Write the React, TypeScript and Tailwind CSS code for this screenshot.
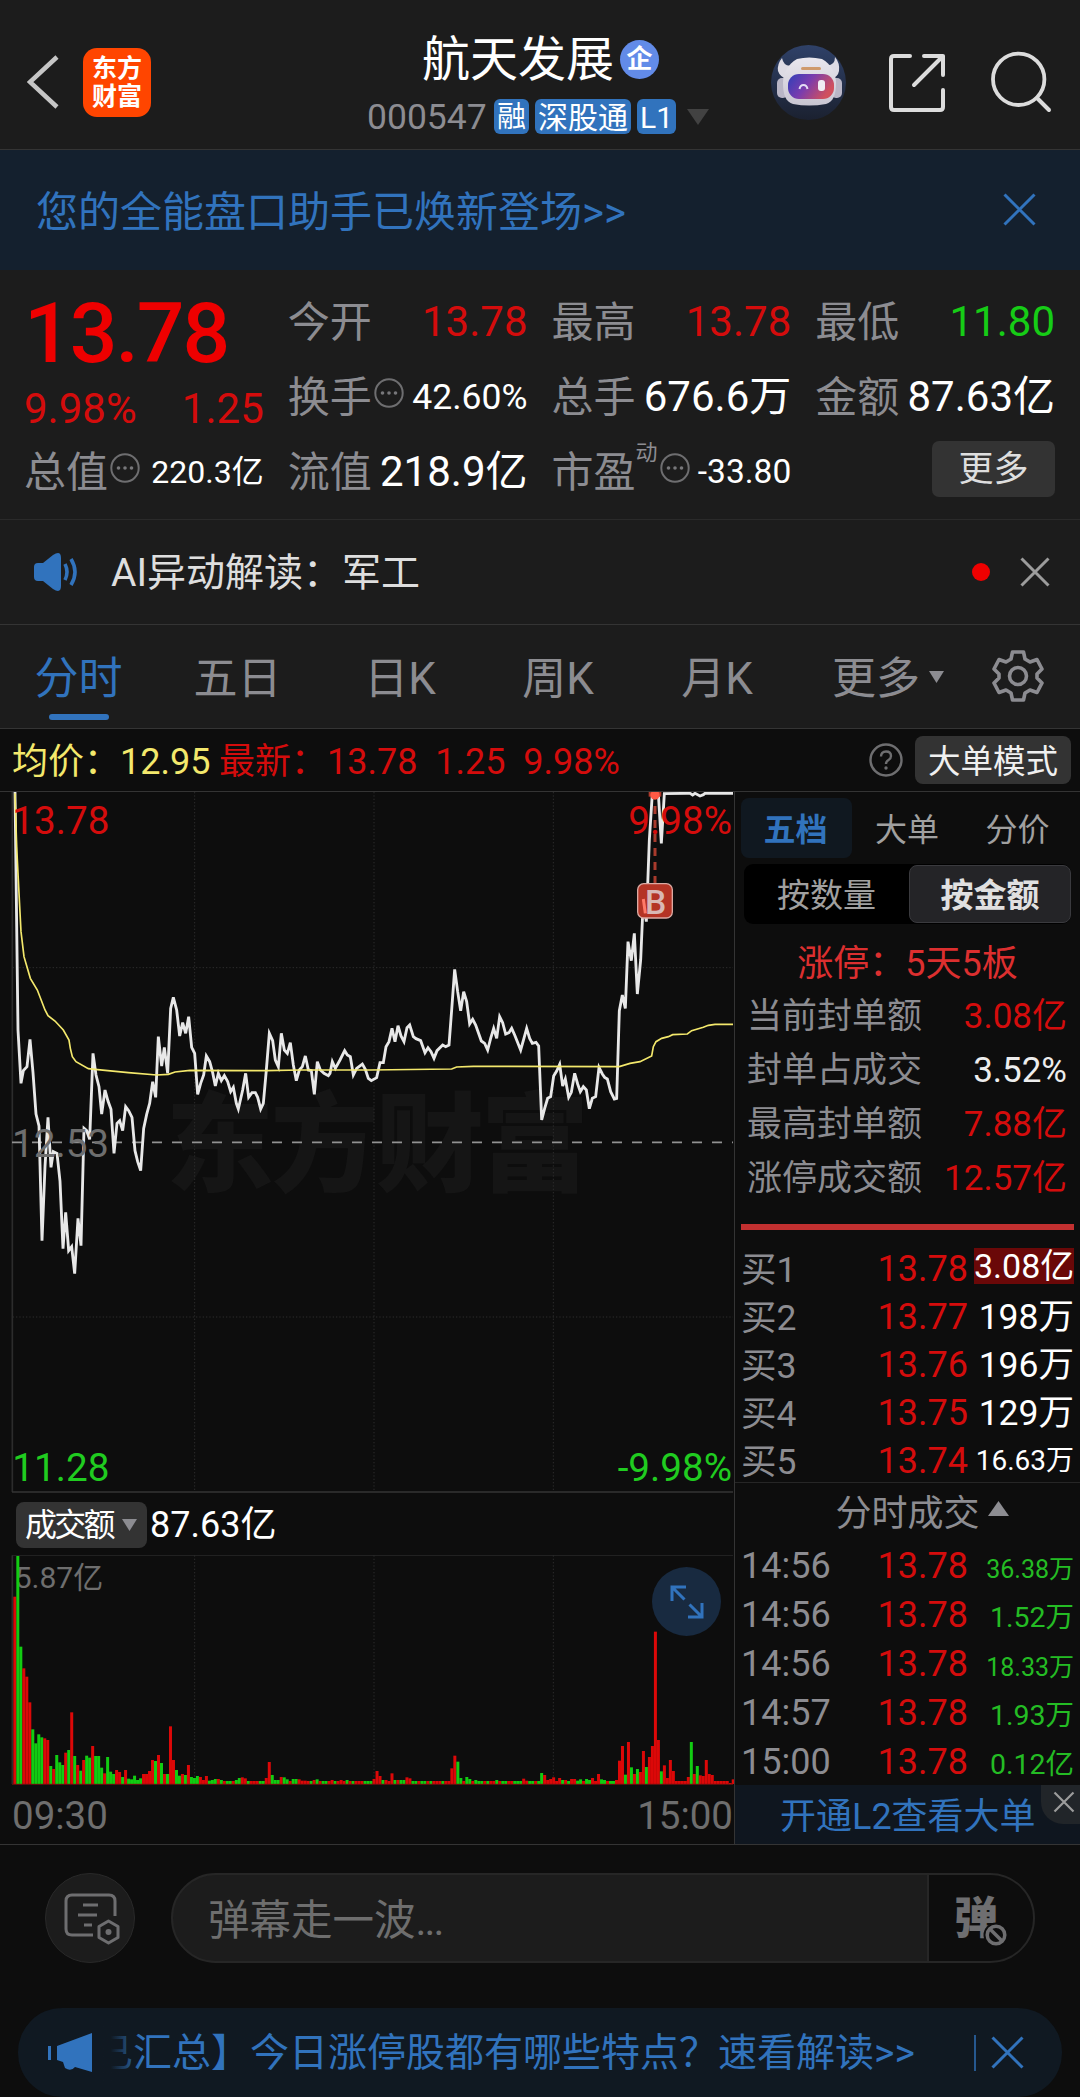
import React from "react";
import { clsx } from "clsx";

// avg / price series, three units per pixel
const pricePoints =
  "45,36 54,750 63,910 70,872 81,860 90,778 99,878 108,1002 117,1038 126,1382 135,1160 144,1012 153,1162 160,1115 171,1120 180,1203 189,1406 197,1297 206,1412 215,1400 224,1481 234,1315 243,1397 252,1045 260,1052 269,1078 279,820 288,885 297,920 305,1002 315,930 324,963 333,988 342,1120 351,1030 359,1022 368,1052 377,980 386,992 396,1012 405,1112 413,1145 422,1172 431,1045 440,1003 449,970 458,905 467,952 475,770 485,858 493,802 503,880 512,685 520,652 530,690 539,768 548,728 557,760 566,710 575,802 584,820 593,943 602,910 611,885 619,828 629,845 638,878 646,918 655,880 664,902 673,887 683,905 692,935 700,922 709,970 715,987 728,930 737,880 746,952 756,938 766,938 773,952 782,987 790,970 799,870 808,760 818,782 826,840 835,860 844,760 853,810 862,820 871,788 880,855 889,902 898,870 907,860 916,828 925,870 934,872 943,943 952,845 961,870 972,880 985,887 990,880 997,845 1006,865 1020,840 1034,812 1042,825 1051,830 1060,885 1070,865 1087,852 1096,868 1105,895 1114,902 1130,893 1140,848 1150,848 1158,800 1167,785 1176,745 1185,785 1194,737 1203,768 1212,785 1221,743 1229,735 1240,770 1248,776 1262,782 1275,818 1284,803 1293,815 1302,835 1311,812 1328,795 1337,800 1347,795 1355,690 1364,568 1373,635 1382,692 1391,635 1400,665 1409,732 1418,718 1427,735 1444,783 1454,790 1463,810 1472,775 1481,745 1490,775 1499,710 1508,728 1517,762 1527,758 1535,745 1544,765 1562,810 1571,778 1580,745 1589,775 1597,790 1608,787 1616,798 1625,1020 1634,985 1643,955 1652,950 1661,888 1670,873 1679,853 1688,918 1696,897 1706,952 1714,937 1724,880 1733,912 1741,935 1750,920 1759,930 1768,986 1777,955 1787,950 1797,862 1807,882 1814,892 1822,897 1832,935 1843,957 1850,955 1858,692 1867,645 1876,685 1884,485 1894,542 1903,460 1912,642 1922,540 1930,357 1939,425 1948,180 1957,40 1975,40 1984,190 1993,41 2060,40 2070,40 2078,45 2085,40 2100,48 2110,44 2115,40 2199,40";

const avgPoints =
  "45,40 50,200 56,320 63,455 72,530 91,595 112,630 135,690 144,707 165,723 190,750 207,780 211,805 217,830 228,845 265,866 285,868 385,878 470,885 505,883 525,876 570,871 800,872 900,870 1110,870 1355,867 1370,861 1420,859 1850,860 1858,860 1890,850 1920,845 1955,828 1960,800 1968,785 1985,775 2005,770 2018,764 2062,762 2075,752 2110,742 2125,736 2145,733 2199,733";

// one bar a minute: positive = up (red), negative = down (green)
const volumes = [
  562, -684, -412, 347, 322, 245, -164, -122, -149, -140, 137, 132, -54, 45, -87, -65, -57, 94, -102, 215,
  -84, 57, -40, 72, -85, -79, 114, -84, -84, -49, 32, -81, -37, -30, 42, 36, -21, 42, -16, -14,
  -25, -12, -17, 30, 30, 39, 72, -69, 87, -63, 30, -30, 173, 72, -42, -25, 30, -27, 57, -21,
  -18, -24, 21, 12, 24, -10, -12, -15, 15, -12, 9, -9, -9, 9, -12, -18, 20, 17, -9, 9,
  9, 9, -9, -9, 18, 66, -27, -12, -12, 21, -20, -14, 9, -15, -15, 14, 10, 10, 9, -9,
  12, -14, 9, -9, -9, 9, 12, -9, 9, 12, 9, -12, 9, -9, 9, 9, 9, -9, -9, -9,
  15, 39, 24, -12, 12, 9, 32, -12, 12, -12, -12, 20, 17, -9, -9, 9, -9, -9, 9, -9,
  9, 9, 9, -9, 9, 9, 47, 85, -67, -18, 9, -21, -15, 9, -12, -9, -9, 9, -9, 9,
  9, -12, 9, -9, -9, 9, 9, -9, -9, -9, 16, 10, -9, -9, 9, -9, -33, 27, 12, 15,
  20, 9, 18, -12, 12, -9, 15, 15, -10, -14, 9, -15, -12, 18, 9, 30, -14, -12, 9, -9,
  -9, 12, 70, 114, -28, 126, -50, 30, -45, 36, 99, -51, 81, 114, 457, 132, -38, 56, 18, 72,
  39, 9, 9, 9, 9, 21, -126, 30, -54, 26, 24, 72, 30, 27, 9, 9, 9, 9, 9, 3, 14,
];

const periods = [
  { label: "分时", box: "w-[157px]", active: true },
  { label: "五日", box: "w-[161px]" },
  { label: "日K", box: "w-[164px]" },
  { label: "周K", box: "w-[152px]" },
  { label: "月K", box: "w-[166px]" },
];

const limitStats = [
  { label: "当前封单额", value: "3.08亿", color: "text-[#d40c0c]" },
  { label: "封单占成交", value: "3.52%", color: "text-[#ededed]" },
  { label: "最高封单额", value: "7.88亿", color: "text-[#d40c0c]" },
  { label: "涨停成交额", value: "12.57亿", color: "text-[#d40c0c]" },
];

const bids = [
  { label: "买1", price: "13.78", amount: "3.08亿", size: "text-[34px]", highlight: true },
  { label: "买2", price: "13.77", amount: "198万", size: "text-[35.5px]" },
  { label: "买3", price: "13.76", amount: "196万", size: "text-[35.5px]" },
  { label: "买4", price: "13.75", amount: "129万", size: "text-[35.5px]" },
  { label: "买5", price: "13.74", amount: "16.63万", size: "text-[28px]" },
];

const ticks = [
  { time: "14:56", amount: "36.38万", small: true },
  { time: "14:56", amount: "1.52万" },
  { time: "14:56", amount: "18.33万", small: true },
  { time: "14:57", amount: "1.93万" },
  { time: "15:00", amount: "0.12亿" },
];

const Cross = ({ size, className, width = 3 }: { size: number; className?: string; width?: number }) => (
  <svg width={size} height={size} viewBox={`0 0 ${size} ${size}`} className={clsx("shrink-0", className)}>
    <path
      d={`M1.5 1.5L${size - 1.5} ${size - 1.5}M${size - 1.5} 1.5L1.5 ${size - 1.5}`}
      stroke="currentColor"
      strokeWidth={width}
      fill="none"
    />
  </svg>
);

const Dots = () => (
  <svg width="30" height="30" viewBox="0 0 30 30" className="mb-[7px] ml-[2px] shrink-0">
    <circle cx="15" cy="15" r="13.7" fill="none" stroke="#6e6e70" strokeWidth="2" />
    <circle cx="8.5" cy="15" r="1.8" fill="#77777a" />
    <circle cx="15" cy="15" r="1.8" fill="#77777a" />
    <circle cx="21.5" cy="15" r="1.8" fill="#77777a" />
  </svg>
);

const Robot = () => (
  <svg width="76" height="76" viewBox="0 0 76 76">
    <defs>
      <linearGradient id="visor" x1="0" y1="0" x2="1" y2="0.4">
        <stop offset="0" stopColor="#2f3fb8" />
        <stop offset="0.5" stopColor="#7a3cae" />
        <stop offset="1" stopColor="#d0505e" />
      </linearGradient>
      <linearGradient id="halo" x1="0" y1="0" x2="0" y2="1">
        <stop offset="0" stopColor="#2f4168" />
        <stop offset="1" stopColor="#1b2130" />
      </linearGradient>
      <linearGradient id="helmet" x1="0" y1="0" x2="0" y2="1">
        <stop offset="0" stopColor="#e9e7ee" />
        <stop offset="1" stopColor="#c9c6d2" />
      </linearGradient>
    </defs>
    <circle cx="37.5" cy="37.5" r="37.5" fill="url(#halo)" />
    <path d="M11 13Q6 19 7 26Q9 32 16 34L23 20Q13 23 11 13Z" fill="#dddbe4" />
    <path d="M64 12Q69 18 68 26Q67 32 60 34L53 20Q64 22 64 12Z" fill="#dddbe4" />
    <rect x="6" y="33" width="11" height="20" rx="5" fill="#b9b6c6" />
    <rect x="60" y="33" width="11" height="20" rx="5" fill="#b9b6c6" />
    <path
      d="M26 14Q38 11 51 14C60 19 65 28 65 38C65 50 62 57 55 59Q38 62 22 59C15 57 12 50 12 38C12 28 17 19 26 14Z"
      fill="url(#helmet)"
    />
    <rect x="30" y="22" width="20" height="3" rx="1.5" fill="#cf9a6c" />
    <rect x="17" y="29" width="46" height="25" rx="11" fill="url(#visor)" />
    <path d="M28.5 44C29.5 38.5 35.5 38.5 36.5 44" stroke="#e4dcf4" strokeWidth="2" fill="none" />
    <rect x="47" y="35" width="7" height="11" rx="3" fill="#f0ecf4" />
  </svg>
);

const Header = () => (
  <header className="flex h-[150px] border-b border-[#343434] bg-[#1c1c1c]">
    <div className="flex w-[368px] items-start pl-[27px] pt-[48px]">
      <svg width="32" height="54" viewBox="0 0 32 54" className="mt-[7px]">
        <path d="M30 2L3 27L30 52" fill="none" stroke="#c6c6c6" strokeWidth="4.5" />
      </svg>
      <div className="ml-[24px] flex h-[69px] w-[68px] flex-col items-center justify-center rounded-[14px] bg-[#ff4500] text-[25px] leading-[28px] font-bold text-white">
        <span>东方</span>
        <span>财富</span>
      </div>
    </div>
    <div className="flex w-[403px] flex-col pt-[32px]">
      <div className="flex h-[54px] items-center pl-[54px] text-[48px] leading-[54px] text-white">
        <span className="pt-[2px]">航天发展</span>
        <span className="ml-[6px] flex size-[39px] items-center justify-center rounded-full bg-[#628be8] text-[26px] leading-[39px] font-bold">
          企
        </span>
      </div>
      <div className="mt-[12px] flex h-[37px] items-center gap-[6px] text-[31px] leading-[37px] text-white">
        <span className="-ml-px w-[121px] pt-px text-[35.5px] text-[#8c8c91]">000547</span>
        <span className="h-[35px] w-[35px] rounded-[6px] bg-[#3173bd] text-center text-[29px]">融</span>
        <span className="h-[35px] w-[96px] rounded-[6px] bg-[#3173bd] text-center text-[30px]">深股通</span>
        <span className="h-[35px] w-[39px] rounded-[6px] bg-[#3173bd] text-center text-[30px]">L1</span>
        <svg width="22" height="16" viewBox="0 0 22 16" className="ml-[5px]">
          <path d="M0 0H22L11 16Z" fill="#424242" />
        </svg>
      </div>
    </div>
    <div className="flex h-[120px] items-start pt-[45px]">
      <Robot />
      <svg
        width="60"
        height="60"
        viewBox="0 0 60 60"
        className="mt-[8px] ml-[40px]"
        fill="none"
        stroke="#dcdcdc"
        strokeWidth="4"
        strokeLinecap="round"
        strokeLinejoin="round"
      >
        <path d="M23 3H7Q4 3 4 6V54Q4 57 7 57H53Q56 57 56 54V37M37 3H56V22M56 3L27 32" />
      </svg>
      <svg width="64" height="64" viewBox="0 0 64 64" className="mt-[5px] ml-[42px]">
        <circle cx="29.7" cy="29.3" r="25.7" fill="none" stroke="#dcdcdc" strokeWidth="3.8" />
        <path d="M48 48L60 60" stroke="#dcdcdc" strokeWidth="4" strokeLinecap="round" />
      </svg>
    </div>
  </header>
);

const Label = ({ children }: { children: React.ReactNode }) => (
  <span className="-ml-px pt-[3px]">{children}</span>
);

const Quotes = () => (
  <section className="grid h-[250px] grid-cols-4 grid-rows-[75px_75px_75px] gap-x-[25px] border-b border-[#2a2a2a] bg-[#1c1c1c] px-[25px] pt-[14px] text-[42px] leading-[50px] text-[#8c8c91]">
    <div className="row-span-2 text-[#d40c0c]">
      <div className="-ml-px h-[100px] text-[84px] leading-[100px] font-medium tracking-[-2px] text-[#ee0000]">
        13.78
      </div>
      <div className="-ml-px flex h-[50px] items-center justify-between">
        <span>9.98%</span>
        <span>1.25</span>
      </div>
    </div>
    <div className="flex items-center justify-between">
      <Label>今开</Label>
      <span className="text-[#d40c0c]">13.78</span>
    </div>
    <div className="flex items-center justify-between">
      <Label>最高</Label>
      <span className="text-[#d40c0c]">13.78</span>
    </div>
    <div className="flex items-center justify-between">
      <Label>最低</Label>
      <span className="text-[#16cc16]">11.80</span>
    </div>
    <div className="flex items-center">
      <Label>换手</Label>
      <Dots />
      <span className="ml-auto text-[35.5px] text-white">42.60%</span>
    </div>
    <div className="flex items-center justify-between">
      <Label>总手</Label>
      <span className="text-white">676.6万</span>
    </div>
    <div className="flex items-center justify-between">
      <Label>金额</Label>
      <span className="text-white">87.63亿</span>
    </div>
    <div className="flex items-center">
      <Label>总值</Label>
      <Dots />
      <span className="ml-auto text-[32px] text-white">220.3亿</span>
    </div>
    <div className="flex items-center justify-between">
      <Label>流值</Label>
      <span className="text-white">218.9亿</span>
    </div>
    <div className="flex items-center">
      <Label>市盈</Label>
      <span className="mb-[38px] text-[22px] leading-[24px]">动</span>
      <Dots />
      <span className="ml-auto text-[33.5px] text-white">-33.80</span>
    </div>
    <div className="flex items-center justify-end">
      <button className="mb-[5px] h-[56px] w-[123px] rounded-[7px] bg-[#333333] text-[35px] leading-[57px] text-[#dedede]">
        更多
      </button>
    </div>
  </section>
);

const AiNotice = () => (
  <div className="flex h-[105px] items-center border-b border-[#343434] bg-[#1c1c1c] pl-[33px] text-[39px] leading-[50px] text-[#dedede]">
    <svg width="46" height="38" viewBox="0 0 46 38">
      <path
        d="M1 14Q1 10 5 10H10L20 2Q28 -3 28 5V33Q28 41 20 36L10 28H5Q1 28 1 24Z"
        fill="#3173bd"
      />
      <path d="M32 11Q36 19 32 27M38 6Q46 19 38 32" fill="none" stroke="#3173bd" strokeWidth="3.6" />
    </svg>
    <span className="ml-[32px] pt-[2px]">AI异动解读：军工</span>
    <span className="ml-auto size-[18px] rounded-full bg-[#ee0000]" />
    <Cross size={30} className="mr-[30px] ml-[30px] text-[#9c9c9c]" />
  </div>
);

const PeriodTabs = () => (
  <nav className="flex h-[104px] border-b border-[#343434] bg-[#1c1c1c] text-[44px] leading-[50px] text-[#8c8c91]">
    {periods.map((p) => (
      <div key={p.label} className={clsx("flex flex-col items-center pt-[29px]", p.box, p.active && "text-[#3173bd]")}>
        <span>{p.label}</span>
        {p.active && <span className="mt-[10px] h-[6px] w-[60px] rounded-full bg-[#3173bd]" />}
      </div>
    ))}
    <div className="mt-[29px] ml-[32px] flex h-[50px] items-center self-start">
      更多
      <svg width="15" height="12" viewBox="0 0 15 12" className="mb-[4px] ml-[9px]">
        <path d="M0 0H15L7.5 12Z" fill="#8c8c91" />
      </svg>
    </div>
    <svg width="52" height="52" viewBox="0 0 52 52" className="mt-[25px] ml-[48px]">
      <path
        d="M20.5 2H31.5L33 9L38 12L45 9.5L50 19L45 24V28L50 33L45 42.5L38 40L33 43L31.5 50H20.5L19 43L14 40L7 42.5L2 33L7 28V24L2 19L7 9.5L14 12L19 9Z"
        fill="none"
        stroke="#8c8c91"
        strokeWidth="3.6"
        strokeLinejoin="round"
      />
      <circle cx="26" cy="26" r="8.5" fill="none" stroke="#8c8c91" strokeWidth="3.6" />
    </svg>
  </nav>
);

const PriceBar = () => (
  <div className="flex h-[63px] items-center border-b border-[#343434] pl-[12px] text-[36px] leading-[50px] whitespace-pre">
    <span className="w-[207px] pt-[3px] text-[#f3e86c]">均价：12.95</span>
    <span className="pt-[3px] text-[#d40c0c]">最新：13.78{"  "}1.25{"  "}9.98%</span>
    <svg width="34" height="34" viewBox="0 0 34 34" className="ml-auto">
      <circle cx="17" cy="17" r="15.5" fill="none" stroke="#6e6e70" strokeWidth="2.4" />
      <path
        d="M12 13.5Q12 8.5 17 8.5Q22 8.5 22 13Q22 15.5 19.5 17Q17 18.5 17 21"
        fill="none"
        stroke="#6e6e70"
        strokeWidth="2.4"
      />
      <circle cx="17" cy="25" r="1.7" fill="#6e6e70" />
    </svg>
    <button className="mr-[9px] ml-[12px] h-[48px] w-[156px] rounded-[8px] bg-[#333333] text-[32.5px] leading-[53px] text-[#f0f0f0]">
      大单模式
    </button>
  </div>
);

const PriceChart = () => (
  <svg width="734" height="702" viewBox="0 36 2202 2106" className="block">
    <text x="497" y="1208" fontSize="325" letterSpacing="-10" fontWeight="900" fill="#151515">
      东方财富
    </text>
    <g stroke="#2d2d2d" strokeWidth="3" strokeDasharray="4 6">
      <path d="M584 36V2136M1122 36V2136M1660 36V2136" />
      <path d="M38 563H2199M38 1611H2199" />
    </g>
    <path d="M37 36V2136" stroke="#2c2c2c" strokeWidth="5" />
    <path d="M36 2136H2199" stroke="#353535" strokeWidth="5" />
    <path d="M36 1087H2199" stroke="#929292" strokeWidth="5" strokeDasharray="30 30" />
    <polyline points={pricePoints} fill="none" stroke="#e8e8e8" strokeWidth="8.5" />
    <polyline points={avgPoints} fill="none" stroke="#f3e86c" strokeWidth="5" />
    <g fontSize="116">
      <text x="37" y="162" fill="#d40c0c">
        13.78
      </text>
      <text x="2196" y="162" textAnchor="end" fill="#d40c0c">
        9.98%
      </text>
      <text x="36" y="1131" fill="#6e6e6e">
        12.53
      </text>
      <text x="37" y="2104" fill="#20cc20">
        11.28
      </text>
      <text x="2196" y="2104" textAnchor="end" fill="#20cc20">
        -9.98%
      </text>
    </g>
    <path d="M1965 78V310" stroke="#a83a2c" strokeWidth="9" strokeDasharray="24 18" />
    <path d="M1946 36H1984V50H1946Z" fill="#b03a2c" />
    <circle cx="1965" cy="45" r="14" fill="#ff5a45" />
    <rect x="1913" y="311" width="104" height="103" rx="18" fill="#b43425" stroke="#dba9a2" strokeWidth="4" />
    <path d="M1930 357L1936 400" stroke="#ff7a68" strokeWidth="9" />
    <text x="1967" y="402" fontSize="101" fontWeight="500" textAnchor="middle" fill="#d9b8b4">
      B
    </text>
  </svg>
);

const VolumeChart = () => (
  <svg width="734" height="230" viewBox="0 255 2202 690" className="block">
    <path d="M36 256H2199" stroke="#262626" strokeWidth="3" />
    <path d="M37 256V942" stroke="#2c2c2c" strokeWidth="5" />
    <path d="M584 256V942M1122 256V942M1660 256V942" stroke="#2d2d2d" strokeWidth="3" strokeDasharray="4 6" />
    <text x="44" y="353" fontSize="90" fill="#6e6e6e">
      5.87亿
    </text>
    {volumes.map((v, i) => (
      <rect
        key={i}
        x={40 + i * 8.98}
        y={942 - Math.abs(v)}
        width="9"
        height={Math.abs(v)}
        fill={v > 0 ? "#dc0808" : "#12cc12"}
      />
    ))}
    <path d="M36 943H2199" stroke="#6b1010" strokeWidth="3" />
  </svg>
);

const ChartColumn = () => (
  <div className="w-[734px] shrink-0">
    <PriceChart />
    <div className="flex h-[61px] items-center pl-[16px]">
      <button className="flex h-[46px] w-[131px] items-center rounded-[8px] bg-[#333333] pl-[9px] text-[32px] leading-[46px] tracking-[-2.8px] text-white">
        成交额
        <svg width="15" height="12" viewBox="0 0 15 12" className="ml-[9px]">
          <path d="M0 0H15L7.5 12Z" fill="#8c8c91" />
        </svg>
      </button>
      <span className="ml-[3px] text-[36px] leading-[46px] text-white">87.63亿</span>
    </div>
    <div className="relative">
      <VolumeChart />
      <div className="absolute top-[12px] right-[13px] flex size-[69px] items-center justify-center rounded-full bg-[#182a40]">
        <svg width="34" height="34" viewBox="0 0 34 34">
          <path
            d="M16 2H2V16M2 2L14.5 14.5M32 18V32H18M32 32L19.5 19.5"
            fill="none"
            stroke="#3173bd"
            strokeWidth="3"
          />
        </svg>
      </div>
    </div>
    <div className="flex h-[59px] justify-between pt-[6px] pr-[1px] pl-[12px] text-[38.5px] leading-[50px] text-[#6e6e6e]">
      <span>09:30</span>
      <span>15:00</span>
    </div>
  </div>
);

const OrderBook = () => (
  <aside className="flex-1 border-l border-[#343434] pt-[6px]">
    <div className="flex h-[60px] pl-[6px] text-center text-[32px] leading-[64px] text-[#a0a0a0]">
      <span className="w-[111px] rounded-[8px] bg-[#101820] pr-[2px] font-bold text-[#3173bd]">五档</span>
      <span className="w-[110px]">大单</span>
      <span className="w-[111px]">分价</span>
    </div>
    <div className="mt-[6px] mr-[9px] ml-[9px] flex h-[60px] items-center rounded-[9px] bg-black text-center text-[33px] leading-[60px] text-[#a0a0a0]">
      <span className="flex-1 pt-[3px]">按数量</span>
      <span className="h-[58px] w-[162px] rounded-[8px] border border-[#3a3a3e] bg-[#242427] font-bold text-[#e0e0e0]">
        按金额
      </span>
    </div>
    <div className="mt-[15px] h-[50px] text-center text-[36px] leading-[50px] text-[#dc2f2f]">涨停：5天5板</div>
    <div className="mt-px h-[215px] pr-[13px] pl-[12px] text-[35px]">
      {limitStats.map((s) => (
        <div key={s.label} className="flex h-[54px] items-center justify-between leading-[54px] text-[#8c8c91]">
          {s.label}
          <span className={s.color}>{s.value}</span>
        </div>
      ))}
    </div>
    <div className="mt-[19px] mr-[6px] ml-[6px] h-[6px] bg-[#c23030]" />
    <div className="mt-[15px] h-[237px] pr-[6px] pl-[6px]">
      {bids.map((b) => (
        <div key={b.label} className="flex h-[48px] items-center text-[36px] leading-[48px] text-[#8c8c91]">
          <span className="pt-px text-[35.5px]">{b.label}</span>
          <span className="ml-auto text-[#d40c0c]">{b.price}</span>
          <span
            className={clsx(
              "ml-[6px] w-[100px] text-right whitespace-nowrap text-white",
              b.size,
              b.highlight && "mb-[6px] h-[36px] bg-[#6a0808] leading-[37px]"
            )}
          >
            {b.amount}
          </span>
        </div>
      ))}
    </div>
    <div className="flex h-[59px] items-center justify-center border-t border-[#262626] pt-[3px] pl-[29px] text-[36px] leading-[56px] text-[#8c8c91]">
      分时成交
      <svg width="21" height="15" viewBox="0 0 21 15" className="mb-[11px] ml-[8px]">
        <path d="M10.5 0L21 15H0Z" fill="#8c8c91" />
      </svg>
    </div>
    <div className="h-[244px] pt-px pr-[6px] pl-[6px]">
      {ticks.map((t, i) => (
        <div key={i} className="flex h-[49px] items-baseline text-[36px] leading-[49px] text-[#8c8c91]">
          <span>{t.time}</span>
          <span className="ml-auto text-[#d40c0c]">13.78</span>
          <span className={clsx("w-[106px] text-right text-[#24bc24]", t.small ? "text-[25px]" : "text-[28.5px]")}>
            {t.amount}
          </span>
        </div>
      ))}
    </div>
    <div className="relative h-[59px] bg-[#0f161f] pl-[45px] text-[36px] leading-[65px] text-[#3173bd]">
      开通L2查看大单
      <span className="absolute top-0 right-0 flex h-[39px] w-[39px] items-center justify-center rounded-bl-[22px] bg-[#212529] pb-[5px] pl-[6px]">
        <Cross size={22} width={2.2} className="text-[#9c9c9c]" />
      </span>
    </div>
  </aside>
);

const CommentBar = () => (
  <div className="mt-[28px] flex h-[90px] pl-[45px]">
    <div className="flex size-[90px] items-center justify-center rounded-full border border-[#292929] bg-[#1c1c1c]">
      <svg width="56" height="52" viewBox="0 0 56 52" className="mt-[2px] ml-[4px]" fill="none" stroke="#6e6e70">
        <path d="M51 23V8Q51 2 45 2H8Q2 2 2 8V36Q2 42 8 42H29" strokeWidth="3" />
        <path d="M19 12H34M14 22H33M20 32H28" strokeWidth="3" />
        <path d="M44.5 28L54 33.5V44.5L44.5 50L35 44.5V33.5Z" strokeWidth="3" strokeLinejoin="round" />
        <circle cx="44.5" cy="39" r="3" fill="#6e6e70" stroke="none" />
      </svg>
    </div>
    <div className="ml-[36px] flex h-[90px] w-[864px] overflow-hidden rounded-full border-2 border-[#262626] bg-[#1c1c1c]">
      <span className="flex-1 pl-[35px] text-[41.5px] leading-[92px] text-[#6e6e6e]">
        弹幕走一波<span className="tracking-[-2px]">...</span>
      </span>
      <div className="w-[106px] border-l-2 border-[#262626] bg-[#0d0d0d] pt-[21px] pl-[25px]">
        <div className="relative size-[54px] text-[44px] leading-[46px] font-black text-[#6e6e70]">
          弹
          <svg width="26" height="26" viewBox="0 0 26 26" className="absolute right-[-1px] bottom-[2px]">
            <circle cx="13" cy="13" r="12.5" fill="#0d0d0d" />
            <circle cx="13" cy="13" r="8.8" fill="none" stroke="#6e6e70" strokeWidth="3.5" />
            <path d="M7 7L19 19" stroke="#6e6e70" strokeWidth="3.5" />
          </svg>
        </div>
      </div>
    </div>
  </div>
);

const BottomNotice = () => (
  <div className="mt-[45px] mr-[18px] ml-[18px] flex h-[89px] items-center rounded-[44px] bg-[#101922] pl-[29px] text-[39px] leading-[60px] text-[#3173bd]">
    <svg width="47" height="40" viewBox="0 0 47 40" fill="#3173bd" className="shrink-0">
      <path d="M1 13H4V27H1ZM10 13L45 0V39L28 34Q24 39 18 35L16 29L10 27Z" />
    </svg>
    <div className="relative w-[880px] shrink-0 whitespace-nowrap">
      已汇总】今日涨停股都有哪些特点？速看解读&gt;&gt;
      {/* fade on the side the ticker leaves from */}
      <span className="absolute inset-y-0 left-0 w-[48px] bg-linear-to-r from-[#101922] from-35% to-transparent" />
    </div>
    <span className="h-[36px] w-[2px] bg-[#3173bd]/70" />
    <Cross size={33} className="ml-[15px]" />
  </div>
);

export default function App() {
  return (
    <div className="h-[2097px] w-[1080px] overflow-hidden bg-[#0d0d0d] font-[Roboto,'Noto_Sans_CJK_SC',sans-serif]">
      <Header />
      <div className="flex h-[120px] items-center justify-between bg-[#14202e] pr-[44px] pl-[36px] text-[42px] leading-[60px] text-[#3173bd]">
        <span className="pt-[5px]">您的全能盘口助手已焕新登场&gt;&gt;</span>
        <Cross size={33} className="mb-[2px]" />
      </div>
      <Quotes />
      <AiNotice />
      <PeriodTabs />
      <PriceBar />
      <main className="flex h-[1053px] border-b border-[#343434]">
        <ChartColumn />
        <OrderBook />
      </main>
      <CommentBar />
      <BottomNotice />
    </div>
  );
}
